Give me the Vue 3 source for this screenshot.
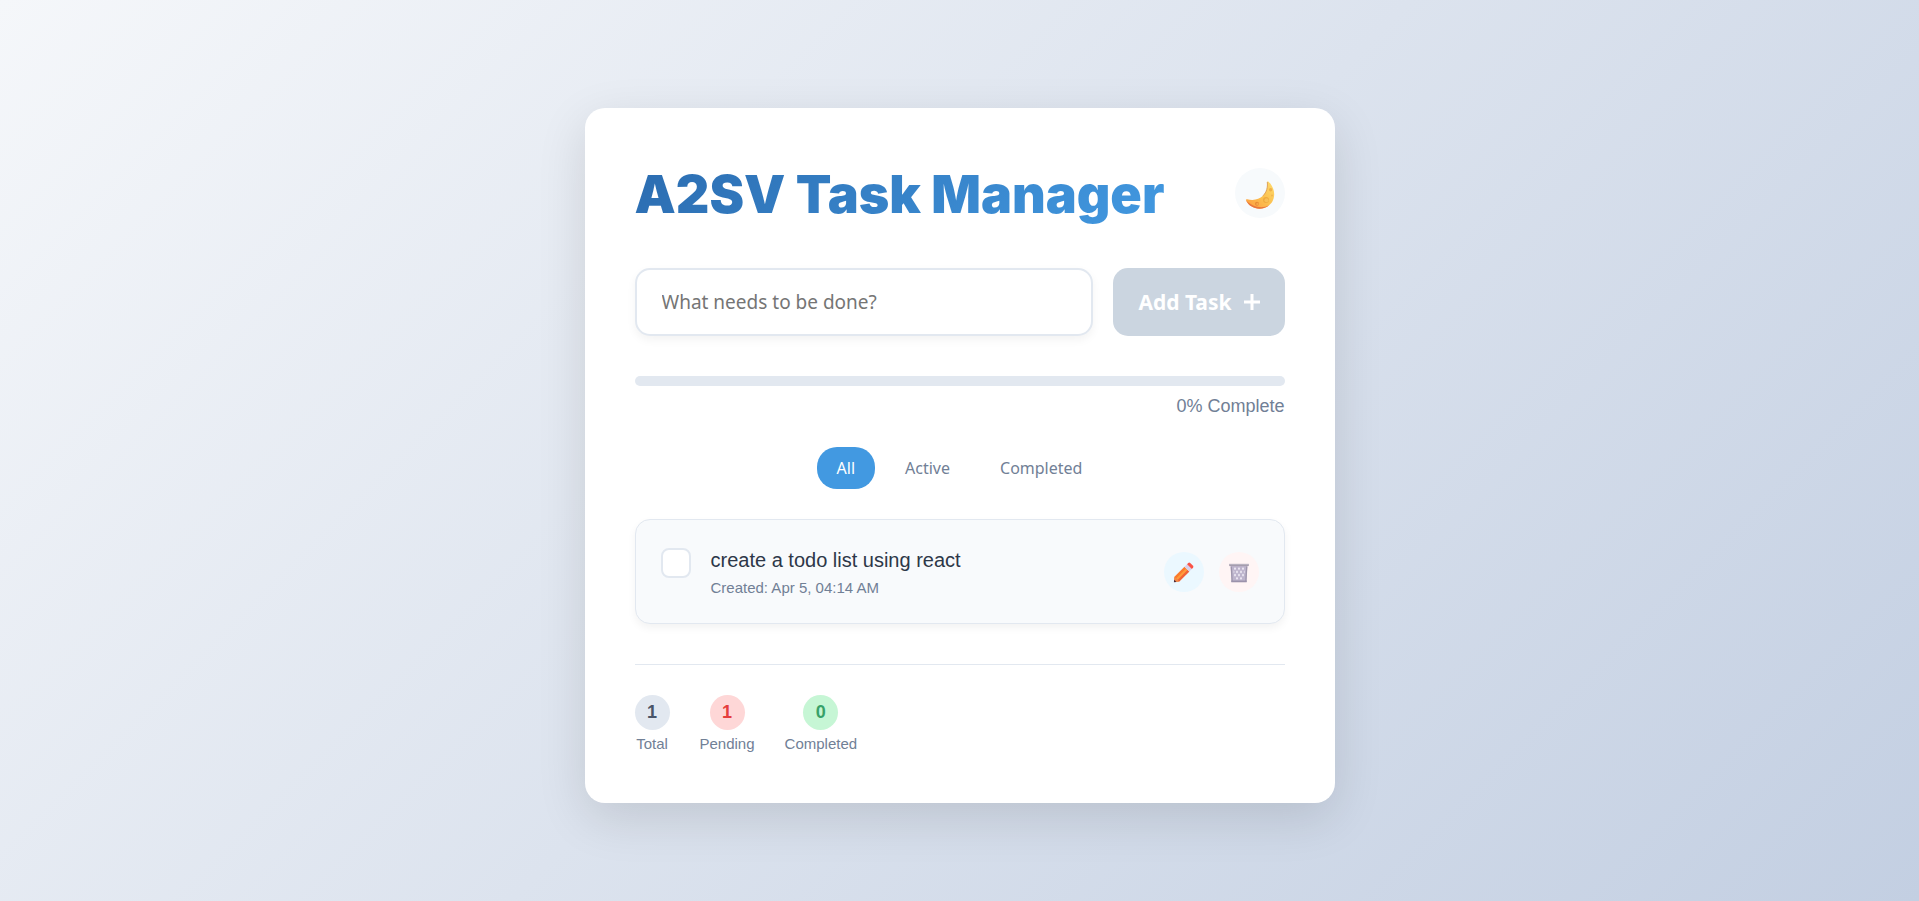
<script setup>
import { ref, computed } from 'vue'

const draft = ref('')
const filter = ref('All')
const filters = ['All', 'Active', 'Completed']
const tasks = ref([
  { id: 1, text: 'create a todo list using react', created: 'Apr 5, 04:14 AM', done: false },
])

const completed = computed(() => tasks.value.filter((t) => t.done).length)
const pending = computed(() => tasks.value.length - completed.value)
const percent = computed(() =>
  tasks.value.length ? Math.round((completed.value / tasks.value.length) * 100) : 0
)
const visible = computed(() =>
  tasks.value.filter((t) =>
    filter.value === 'All' ? true : filter.value === 'Active' ? !t.done : t.done
  )
)
const stats = computed(() => [
  { label: 'Total', value: tasks.value.length, kind: 'total' },
  { label: 'Pending', value: pending.value, kind: 'pending' },
  { label: 'Completed', value: completed.value, kind: 'completed' },
])

function addTask() {
  const text = draft.value.trim()
  if (!text) return
  tasks.value.push({ id: Date.now(), text, created: new Date().toLocaleString(), done: false })
  draft.value = ''
}
function removeTask(id) {
  tasks.value = tasks.value.filter((t) => t.id !== id)
}
</script>

<template>
  <div class="page">
    <main class="card">
      <header class="header">
        <h1 class="title">A2SV Task Manager</h1>
        <button class="round theme" type="button" aria-label="Switch to dark mode">
          <svg width="30" height="30" viewBox="0 0 30 30" aria-hidden="true">
            <defs>
              <linearGradient id="moon" x1="0" y1="1" x2="1" y2="0">
                <stop offset="0" stop-color="#ff9b3d" />
                <stop offset="0.5" stop-color="#fbc04f" />
                <stop offset="1" stop-color="#ffdc6e" />
              </linearGradient>
            </defs>
            <path d="M23.200 1.500C28 5.500 30.400 12.500 28.600 18.500C26.600 25.300 20.600 28.800 14.500 28.700C8.500 28.600 3.300 25.500 1 20.300C0.700 19.400 1.300 19 2.200 19.200C8 20.700 14 19.800 18 15.800C21.600 12.200 22.900 7.500 22.300 2C22.300 1.300 22.800 1.100 23.200 1.500Z" fill="url(#moon)" />
            <path d="M1 20.300C3.300 25.500 8.500 28.600 14.500 28.700C18 28.700 21.500 27.500 24.200 25.200C18 28.600 8 28 1 20.300Z" fill="#e8763f" />
            <path d="M22.300 2C22.900 7.500 21.600 12.200 18 15.800" fill="none" stroke="#d99a52" stroke-width="0.900" />
            <circle cx="21" cy="20" r="3" fill="#efaa3f" />
            <circle cx="21.500" cy="20.300" r="2" fill="#f8bf55" />
            <circle cx="12" cy="23.800" r="2" fill="#e58a35" />
            <circle cx="12.400" cy="24" r="1.200" fill="#f6a648" />
            <circle cx="25.600" cy="9.800" r="1.700" fill="#eeb04a" />
            <circle cx="27" cy="15.500" r="1" fill="#f0b550" />
          </svg>
        </button>
      </header>

      <form class="entry" @submit.prevent="addTask">
        <input v-model="draft" class="field" type="text" placeholder="What needs to be done?" aria-label="New task" />
        <button class="add" type="submit" :disabled="!draft.trim()">
          <span>Add Task</span>
          <svg width="16" height="16" viewBox="0 0 16 16" aria-hidden="true">
            <path d="M8 0V16M0 8H16" stroke="#fff" stroke-width="3" />
          </svg>
        </button>
      </form>

      <section class="progress">
        <div class="track" role="progressbar" aria-label="Completed tasks" :aria-valuenow="percent">
          <div class="fill" :style="{ width: percent + '%' }"></div>
        </div>
        <p class="percent">{{ percent }}% Complete</p>
      </section>

      <nav class="filters" aria-label="Filter tasks">
        <button
          v-for="name in filters"
          :key="name"
          type="button"
          class="filter"
          :class="{ active: filter === name }"
          @click="filter = name"
        >{{ name }}</button>
      </nav>

      <ul class="list">
        <li v-for="task in visible" :key="task.id" class="task">
          <input :id="'task-' + task.id" v-model="task.done" class="check" type="checkbox" />
          <div class="body">
            <label class="name" :for="'task-' + task.id">{{ task.text }}</label>
            <span class="created">Created: {{ task.created }}</span>
          </div>
          <div class="actions">
            <button class="round edit" type="button" aria-label="Edit task">
              <svg width="21" height="21" viewBox="0 0 22 22" aria-hidden="true">
                <path d="M1.500 15.500L12 5L17 10L6.500 20.500L1 21Z" fill="#fb7a2c" />
                <path d="M3.200 17.200L13.700 6.700L15.300 8.300L4.900 18.700Z" fill="#ff9b3c" />
                <path d="M5 19L15.300 8.300L17 10L6.500 20.500Z" fill="#f0623a" />
                <path d="M1.500 15.500L6.500 20.500L1 21Z" fill="#f08a4c" />
                <path d="M1.200 18.600L3.600 20.900L1 21.200Z" fill="#43283c" />
                <path d="M12 5L14.700 2.300L19.700 7.300L17 10Z" fill="#d9d0ea" />
                <path d="M14.700 2.300L16 1Q17 0.200 18 1L21 4Q21.800 5 21 6L19.700 7.300Z" fill="#fa5347" />
              </svg>
            </button>
            <button class="round delete" type="button" aria-label="Delete task" @click="removeTask(task.id)">
              <svg width="20" height="20" viewBox="0 0 20 22" preserveAspectRatio="none" aria-hidden="true">
                <path d="M1.500 3H18.500L17.500 21H2.500Z" fill="#bdb4cc" />
                <g fill="#f4f0f9">
                  <path d="M6 4.500l1 1.800l-1 1.800l-1-1.800zM10 4.500l1 1.800l-1 1.800l-1-1.800zM14 4.500l1 1.800l-1 1.800l-1-1.800z" />
                  <path d="M8 8l1 1.800l-1 1.800l-1-1.800zM12 8l1 1.800l-1 1.800l-1-1.800zM4.700 8l.8 1.800l-.8 1.500zM15.500 8v3.500l-.8-1.700z" />
                  <path d="M6 11.500l1 1.800l-1 1.800l-1-1.800zM10 11.500l1 1.800l-1 1.800l-1-1.800zM14 11.500l1 1.800l-1 1.800l-1-1.800z" />
                  <path d="M8 15l1 1.800l-1 1.800l-1-1.800zM12 15l1 1.800l-1 1.800l-1-1.800z" />
                </g>
                <path d="M2.300 4L3.200 20.500M17.700 4L16.800 20.500" stroke="#9d95ab" stroke-width="1.200" />
                <path d="M0.200 1H19.800V3.400H0.200Z" fill="#a59dad" />
                <path d="M0.200 1H19.800V1.900H0.200Z" fill="#c0bac8" />
                <path d="M2.300 19.300H17.700V21.200H2.300Z" fill="#9b92ab" />
              </svg>
            </button>
          </div>
        </li>
      </ul>

      <footer class="stats">
        <div v-for="s in stats" :key="s.label" class="stat">
          <span class="count" :class="s.kind">{{ s.value }}</span>
          <span class="label">{{ s.label }}</span>
        </div>
      </footer>
    </main>
  </div>
</template>

<style>
body {
  margin: 0;
}
</style>

<style scoped>
* {
  box-sizing: border-box;
}
.page {
  min-height: 100vh;
  padding: 10px 20px 0;
  display: flex;
  align-items: center;
  justify-content: center;
  background: linear-gradient(135deg, #f5f7fa 0%, #c3cfe2 100%);
  font-family: "Liberation Sans", Arial, sans-serif;
  color: #2d3748;
}
.card {
  width: 100%;
  max-width: 750px;
  padding: 50px;
  background: #fff;
  border-radius: 20px;
  box-shadow: 0 15px 50px rgba(0, 0, 0, 0.12);
}
.header {
  display: flex;
  align-items: center;
  justify-content: space-between;
  margin-bottom: 40px;
}
.title {
  margin: 0;
  padding-top: 4px;
  font-family: Inter, "Liberation Sans", sans-serif;
  font-size: 52px;
  font-weight: 900;
  line-height: 66px;
  background: linear-gradient(135deg, #2b6cb0, #4299e1);
  -webkit-background-clip: text;
  background-clip: text;
  color: transparent;
}
.round {
  display: flex;
  align-items: center;
  justify-content: center;
  flex: none;
  width: 40px;
  height: 40px;
  padding: 2px 0 0;
  border: 0;
  border-radius: 50%;
  cursor: pointer;
}
.theme {
  width: 50px;
  height: 50px;
  padding-top: 4px;
  background: #f7fafc;
}
.entry {
  display: flex;
  gap: 20px;
  margin-bottom: 40px;
}
.field {
  flex: 1;
  min-width: 0;
  height: 68px;
  padding: 0 25px;
  border: 2px solid #e2e8f0;
  border-radius: 15px;
  background: #fff;
  box-shadow: 0 4px 10px rgba(0, 0, 0, 0.05);
  font-family: "Noto Sans", sans-serif;
  font-size: 19px;
  color: #2d3748;
}
.field::placeholder {
  color: #757575;
}
.add {
  display: flex;
  align-items: center;
  gap: 12px;
  padding: 0 25px;
  border: 0;
  border-radius: 15px;
  background: #cbd5e0;
  color: #fff;
  font-family: "Noto Sans", sans-serif;
  font-size: 21px;
  font-weight: 700;
}
.progress {
  margin-bottom: 30px;
}
.track {
  height: 10px;
  border-radius: 5px;
  background: #e2e8f0;
  overflow: hidden;
}
.fill {
  height: 100%;
  background: #4299e1;
}
.percent {
  margin: 10px 0 0;
  font-size: 18px;
  line-height: 21px;
  text-align: right;
  color: #718096;
}
.filters {
  display: flex;
  justify-content: center;
  gap: 10px;
  margin-bottom: 30px;
}
.filter {
  height: 42px;
  padding: 0 20px;
  border: 0;
  border-radius: 20px;
  background: transparent;
  font-family: "Noto Sans", sans-serif;
  font-size: 16px;
  color: #718096;
  cursor: pointer;
}
.filter.active {
  background: #4299e1;
  color: #fff;
}
.list {
  margin: 0 0 40px;
  padding: 0;
  list-style: none;
}
.task {
  display: flex;
  align-items: center;
  padding: 25px;
  border: 1px solid #e2e8f0;
  border-radius: 15px;
  background: #f8fafc;
  box-shadow: 0 4px 8px rgba(0, 0, 0, 0.05);
}
.check {
  appearance: none;
  align-self: flex-start;
  flex: none;
  width: 30px;
  height: 30px;
  margin: 3px 20px 0 0;
  border: 2px solid #e2e8f0;
  border-radius: 8px;
  background: #fff;
}
.check:checked {
  background: #4299e1;
}
.body {
  flex: 1;
  display: flex;
  flex-direction: column;
  gap: 4px;
  padding-bottom: 1px;
}
.name {
  font-size: 20px;
  line-height: 30px;
}
.created {
  font-size: 15px;
  line-height: 18px;
  color: #718096;
}
.actions {
  display: flex;
  gap: 15px;
}
.edit {
  background: #ebf8ff;
}
.delete {
  background: #fff5f5;
}
.stats {
  display: flex;
  gap: 30px;
  padding-top: 30px;
  border-top: 1px solid #e2e8f0;
}
.stat {
  display: flex;
  flex-direction: column;
  align-items: center;
  gap: 5px;
}
.count {
  display: flex;
  align-items: center;
  justify-content: center;
  width: 35px;
  height: 35px;
  border-radius: 50%;
  font-size: 18px;
  font-weight: 700;
}
.total {
  background: #e2e8f0;
  color: #4a5568;
}
.pending {
  background: #fed7d7;
  color: #e53e3e;
}
.completed {
  background: #c6f6d5;
  color: #38a169;
}
.label {
  font-size: 15px;
  line-height: 18px;
  color: #718096;
}
</style>
